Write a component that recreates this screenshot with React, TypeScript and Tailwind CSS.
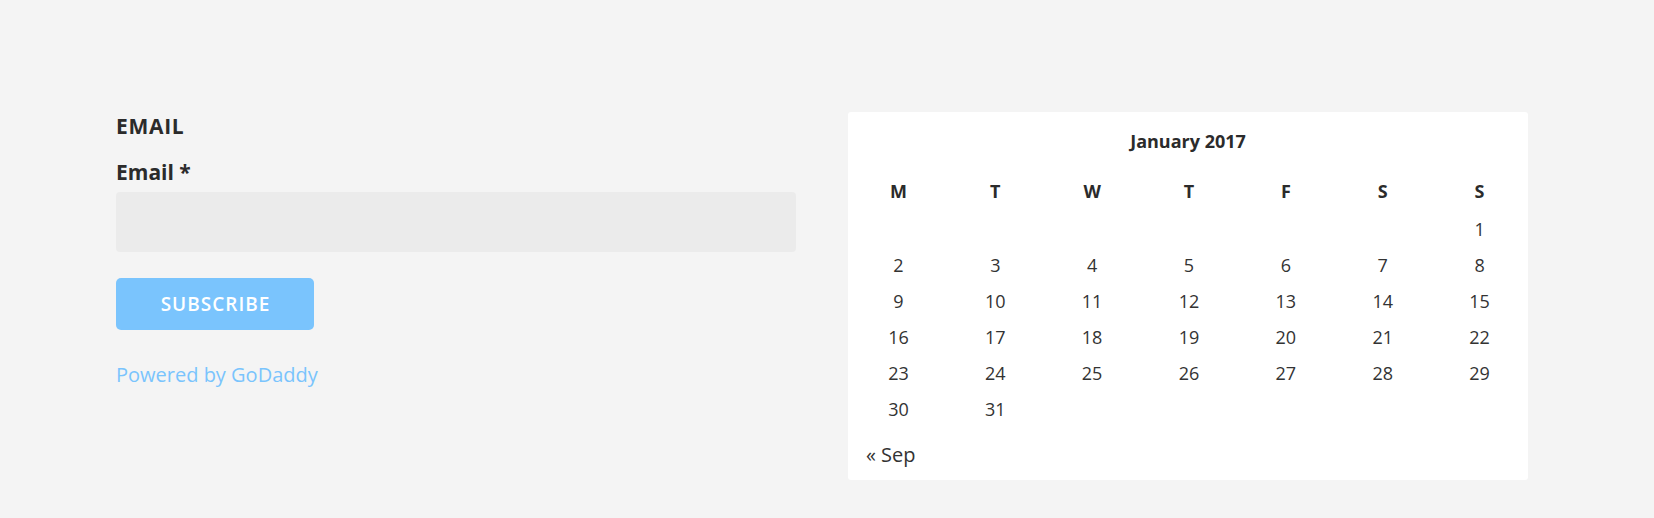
import React from "react";

const days = ["M", "T", "W", "T", "F", "S", "S"];
const weeks: (number | null)[][] = [
  [null, null, null, null, null, null, 1],
  [2, 3, 4, 5, 6, 7, 8],
  [9, 10, 11, 12, 13, 14, 15],
  [16, 17, 18, 19, 20, 21, 22],
  [23, 24, 25, 26, 27, 28, 29],
  [30, 31, null, null, null, null, null],
];

export default function App() {
  return (
    <div className="h-[518px] w-full bg-[#f4f4f4] font-['Open_Sans',sans-serif] text-[#2b2b2b]">
      <div className="flex gap-[52px] pl-[116px] pt-[112px]">
        <div className="w-[680px]">
          <h2 className="mt-[2px] text-[21px] font-bold leading-[24px] tracking-[0.7px]">EMAIL</h2>
          <label className="mt-[22px] block text-[21px] font-bold leading-[24px]">Email *</label>
          <input
            type="email"
            className="mt-[8px] block h-[60px] w-full rounded-[4px] border-0 bg-[#ebebeb] outline-none"
          />
          <button className="mt-[26px] flex h-[52px] w-[198px] items-center justify-center rounded-[5px] bg-[#7ac4fd] pl-[1px] text-[19px] font-semibold tracking-[1px] text-white">
            SUBSCRIBE
          </button>
          <a className="mt-[33px] block text-[20px] leading-[24px] text-[#7ac4fd]">Powered by GoDaddy</a>
        </div>
        <div className="h-[368px] w-[680px] rounded-[3px] bg-white pt-[17px]">
          <div className="text-center text-[18px] font-bold leading-[24px]">January 2017</div>
          <div className="mt-[20px] grid grid-cols-7 pl-[2px]">
            {days.map((d, i) => (
              <div key={i} className="h-[38px] text-center text-[18px] font-bold leading-[36px]">
                {d}
              </div>
            ))}
            {weeks.flat().map((n, i) => (
              <div key={"d" + i} className="h-[36px] text-center text-[18px] leading-[36px] text-[#333]">
                {n ?? ""}
              </div>
            ))}
          </div>
          <div className="mt-[14px] px-[18px] text-[20px] leading-[28px] text-[#333]">« Sep</div>
        </div>
      </div>
    </div>
  );
}
